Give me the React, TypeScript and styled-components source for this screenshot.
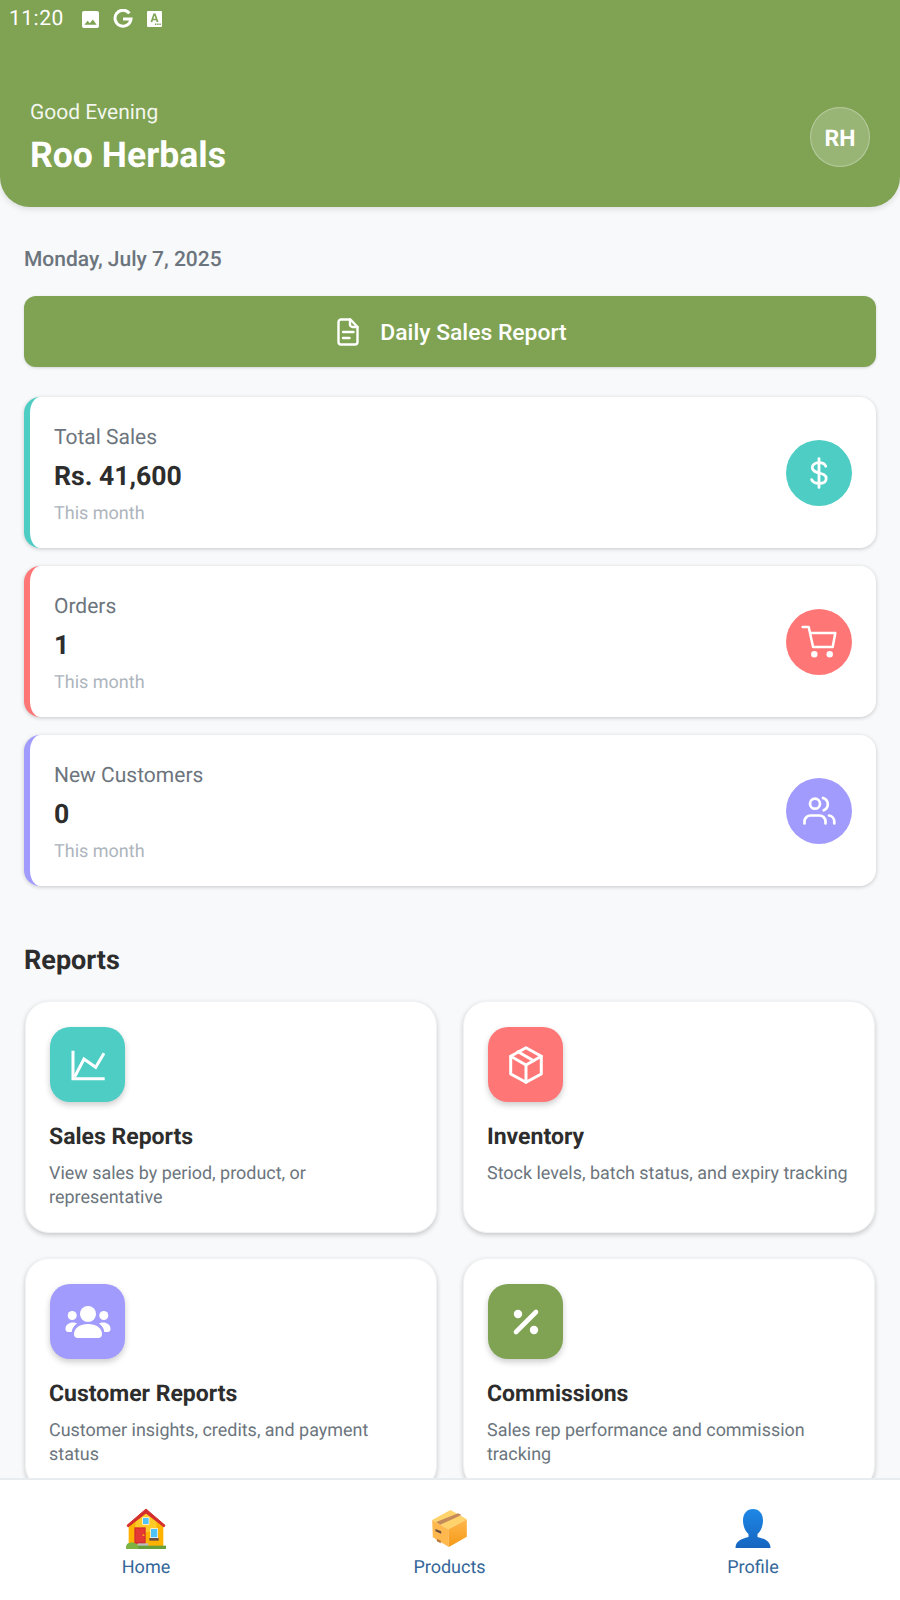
import { ReactNode } from 'react';
import styled, { createGlobalStyle } from 'styled-components';

const GREEN = '#7fa353';
const TEAL = '#4ecdc4';
const CORAL = '#ff7676';
const VIOLET = '#a29bfe';

const GlobalStyle = createGlobalStyle`
  html, body { margin: 0; padding: 0; background: #f8f9fa; }
  * { box-sizing: border-box; }
  body { font-family: Roboto, "Noto Sans", sans-serif; text-rendering: geometricPrecision; }
`;

const Screen = styled.div` width: 900px; height: 1600px; display: flex; flex-direction: column; overflow: hidden; background: #f8f9fa; `;
const Main = styled.div` flex: 1; min-height: 0; overflow: hidden; `;

const Header = styled.header`
  height: 207px; padding: 0 30px; background: ${GREEN}; color: #fff;
  border-radius: 0 0 30px 30px; box-shadow: 0 2px 6px rgba(0,0,0,.12); display: flex; flex-direction: column;
`;
const StatusBar = styled.div` height: 38px; margin-left: -21px; display: flex; align-items: center; gap: 18px; font-size: 21px; letter-spacing: .5px; `;
const StatusIcons = styled.div` display: flex; align-items: center; gap: 14px; `;
const Hero = styled.div` flex: 1; display: flex; justify-content: space-between; align-items: flex-start; padding-top: 64px; `;
const Greeting = styled.div` font-size: 21px; line-height: 24px; margin-top: -1px; color: rgba(255,255,255,.92); `;
const Name = styled.div` font-size: 35.6px; line-height: 44px; font-weight: 700; margin-top: 8px; `;
const Avatar = styled.div`
  width: 60px; height: 60px; margin-top: 5px; padding-top: 2px; border-radius: 50%; background: rgba(255,255,255,.2); border: 1px solid rgba(255,255,255,.3);
  display: flex; align-items: center; justify-content: center; font-size: 23px; font-weight: 700;
`;

const Body = styled.div` padding: 37px 24px 0; `;
const DateText = styled.div` font-size: 21px; line-height: 32px; font-weight: 500; color: #6c757d; margin-bottom: 20px; `;
const ReportButton = styled.button`
  width: 100%; height: 71px; padding: 1px 0 0 4px; border: none; border-radius: 12px; background: ${GREEN}; color: #fff; font-family: inherit; font-size: 22.9px; font-weight: 500;
  display: flex; align-items: center; justify-content: center; gap: 21px; box-shadow: 0 1px 3px rgba(0,0,0,.15);
`;

const StatList = styled.div` display: flex; flex-direction: column; gap: 18px; margin-top: 30px; `;
const StatCard = styled.div<{ $accent: string }>`
  height: 151px; padding: 0 24px; background: #fff; border-radius: 16px; border-left: 6px solid ${(p) => p.$accent};
  box-shadow: 0 1px 4px rgba(0,0,0,.2); display: flex; align-items: center; justify-content: space-between;
`;
const StatCopy = styled.div` padding-top: 5px; `;
const StatLabel = styled.div` font-size: 21px; line-height: 24px; color: #6c757d; `;
const StatValue = styled.div` font-size: 26.6px; line-height: 34px; font-weight: 700; color: #2d2d2d; margin-top: 10px; `;
const StatNote = styled.div` font-size: 18px; line-height: 22px; color: #adb5bd; margin-top: 9px; `;
const StatIcon = styled.div<{ $bg: string }>`
  width: 66px; height: 66px; border-radius: 50%; background: ${(p) => p.$bg}; display: flex; align-items: center; justify-content: center;
`;

const SectionTitle = styled.h2` margin: 56px 0 23px; font-size: 27px; line-height: 36px; font-weight: 700; color: #2d2d2d; `;
const ReportGrid = styled.div` display: grid; grid-template-columns: 1fr 1fr; column-gap: 26px; row-gap: 25px; padding: 0 1px; `;
const ReportCard = styled.div`
  height: 232px; padding: 25px 23px; background: #fff; border-radius: 24px; border: 1px solid #f1f2f3; box-shadow: 0 2px 5px rgba(0,0,0,.2);
`;
const ReportIcon = styled.div<{ $bg: string }>`
  width: 75px; height: 75px; margin-left: 1px; border-radius: 20px; background: ${(p) => p.$bg}; box-shadow: 0 3px 6px rgba(0,0,0,.2);
  display: flex; align-items: center; justify-content: center;
`;
const ReportTitle = styled.div` margin-top: 21px; font-size: 23px; line-height: 28px; font-weight: 700; color: #2d2d2d; `;
const ReportText = styled.div` margin-top: 11px; font-size: 17.95px; line-height: 24px; color: #6c757d; `;

const BottomNav = styled.nav` height: 122px; flex: none; background: #fff; border-top: 2px solid #e9ecef; display: flex; justify-content: space-between; padding: 0 87px 0 86px; `;
const NavItem = styled.div` width: 120px; display: flex; flex-direction: column; align-items: center; padding-top: 26px; color: #336699; `;
const NavGlyph = styled.div` height: 44px; display: flex; align-items: center; justify-content: center; `;
const NavLabel = styled.div` font-size: 18px; line-height: 24px; margin-top: 6px; `;

const Stroke = ({ size = 40, width = 2.5, children }: { size?: number; width?: number; children: ReactNode }) => (
  <svg width={size} height={size} viewBox="0 0 40 40" fill="none" stroke="#fff" strokeWidth={width} strokeLinecap="round" strokeLinejoin="round">{children}</svg>
);

const HouseEmoji = () => (
  <svg width="40" height="41" viewBox="0 0 120 123">
    <path d="M8 50 60 12l52 38v65H8z" fill="#ffb300" />
    <path d="M60 16 28 42v30h64V42z" fill="#ffca28" />
    <path d="M3 52 60 3l57 49-3 5-54-42L6 57z" fill="#d32f2f" stroke="#d32f2f" strokeWidth="3" strokeLinejoin="round" />
    <rect x="49" y="28" width="21" height="22" fill="#fff" />
    <rect x="51" y="30" width="17" height="18" fill="#4fc3f7" />
    <rect x="73" y="61" width="23" height="29" fill="#fff" />
    <rect x="75" y="63" width="19" height="25" fill="#4fc3f7" />
    <rect x="70" y="90" width="28" height="8" fill="#6d4c41" />
    <rect x="25" y="58" width="34" height="50" fill="#d32f2f" />
    <rect x="29" y="62" width="26" height="40" fill="#e53935" />
    <rect x="50" y="79" width="5" height="5" fill="#ffb300" />
    <rect x="35" y="106" width="32" height="11" fill="#bdbdbd" />
    <rect x="1" y="113" width="119" height="10" fill="#689f38" />
    <path d="M1 123v-9c1-7 6-10 10-9 4-4 11-3 14 1 7 0 12 5 12 17z" fill="#7cb342" />
  </svg>
);

const BoxEmoji = () => (
  <svg width="35" height="37" viewBox="0 0 104 111">
    <defs>
      <linearGradient id="boxRight" x1="0" y1="0" x2="0" y2="1">
        <stop offset="0" stopColor="#ffb74d" />
        <stop offset="1" stopColor="#f59a16" />
      </linearGradient>
    </defs>
    <path d="M55 0 104 28 48 58 0 30z" fill="#ffd36b" />
    <path d="M0 30 48 58 50 111 2 82z" fill="#ffb84d" />
    <path d="M48 58 104 28V80L50 111z" fill="url(#boxRight)" />
    <path d="M12 36 78 10 88 15 24 44z" fill="#c48a5a" />
    <path d="M10 57 27 64 27 71 10 64z" fill="#6d4c41" />
    <path d="M14 86 26 92 26 100 14 94z" fill="#b9773c" />
  </svg>
);

const PersonEmoji = () => (
  <svg width="36" height="39" viewBox="0 0 36 39">
    <defs>
      <linearGradient id="personFill" x1="0" y1="0" x2="0" y2="1">
        <stop offset="0" stopColor="#1e88e5" />
        <stop offset="1" stopColor="#1565c0" />
      </linearGradient>
    </defs>
    <path d="M18 0c6 0 10 4.500 10 11.500 0 6-2.500 11-5.500 13.500v3c5 1.500 13 3 13 11H.5c0-8 8-9.500 13-11v-3C10.500 22.500 8 17.500 8 11.500 8 4.500 12 0 18 0z" fill="url(#personFill)" />
  </svg>
);

const stats = [
  {
    label: 'Total Sales', value: 'Rs. 41,600', color: TEAL,
    icon: <Stroke size={36} width={3.1}><path d="M20 4v32" /><path d="M27.500 12.500C26.500 10 24 8.500 20 8.500c-4.500 0-7.500 2.200-7.500 5.500 0 8 15.500 4 15.500 12 0 3.500-3.200 5.500-8 5.500-4.200 0-7.200-1.500-8.200-4.200" /></Stroke>,
  },
  {
    label: 'Orders', value: '1', color: CORAL,
    icon: <Stroke><path d="M3.700 5h6l4.400 20h19.600l2.600-14H11.300" /><circle cx="15.300" cy="32.300" r="2" fill="#fff" /><circle cx="30.700" cy="32.300" r="2" fill="#fff" /></Stroke>,
  },
  {
    label: 'New Customers', value: '0', color: VIOLET,
    icon: <Stroke width={2.7}><circle cx="16" cy="12.700" r="5" /><path d="M5.500 32.500v-2a6 6 0 0 1 6-6h9a6 6 0 0 1 6 6v2" /><path d="M24 7a6.500 6.500 0 0 1 .7 12.300" /><path d="M30 24.500c3 .5 5.300 3 5.300 6v2" /></Stroke>,
  },
];

const reports = [
  {
    title: 'Sales Reports', text: 'View sales by period, product, or representative', color: TEAL,
    icon: <Stroke width={3}><path d="M5 5.700v28h31.700" strokeLinecap="butt" strokeLinejoin="miter" /><path d="M6.700 31.700 16 14l11.700 8.300L36 8.300" strokeLinecap="butt" strokeLinejoin="miter" /></Stroke>,
  },
  {
    title: 'Inventory', text: 'Stock levels, batch status, and expiry tracking', color: CORAL,
    icon: <Stroke width={3}><path d="M20 2.700 35.300 11.300V29L20 37.300 4.700 29V11.300z" /><path d="M4.700 11.300 20 20l15.300-8.700" /><path d="M20 20v17.300" /><path d="M12 6.700l15.700 9" /></Stroke>,
  },
  {
    title: 'Customer Reports', text: 'Customer insights, credits, and payment status', color: VIOLET,
    icon: (
      <svg width={48} height={48} viewBox="0 0 48 48" fill="#fff">
        <circle cx="24" cy="16" r="8" />
        <circle cx="8.200" cy="17.500" r="4.500" />
        <circle cx="39.800" cy="17.500" r="4.500" />
        <path d="M10 36c0-6 6-10 14-10s14 4 14 10a4 4 0 0 1-4 4H14a4 4 0 0 1-4-4z" />
        <path d="M1.500 30.500c0-3.500 3.500-6 7.500-6 1.500 0 3 .3 4 1-3 2-5 5-5.300 8.500H4.500a3 3 0 0 1-3-3z" />
        <path d="M46.500 30.500c0-3.500-3.500-6-7.500-6-1.500 0-3 .3-4 1 3 2 5 5 5.300 8.500h3.200a3 3 0 0 0 3-3z" />
      </svg>
    ),
  },
  {
    title: 'Commissions', text: 'Sales rep performance and commission tracking', color: GREEN,
    icon: (
      <svg width={36} height={36} viewBox="0 0 36 36" fill="#fff">
        <circle cx="10" cy="10" r="4.200" />
        <circle cx="26" cy="26" r="4.200" />
        <path d="M28 8 8 28" stroke="#fff" strokeWidth="4.600" strokeLinecap="round" />
      </svg>
    ),
  },
];

const nav = [
  { glyph: <HouseEmoji />, label: 'Home' },
  { glyph: <BoxEmoji />, label: 'Products' },
  { glyph: <PersonEmoji />, label: 'Profile' },
];

export default function App() {
  return (
    <Screen>
      <GlobalStyle />
      <Main>
        <Header>
          <StatusBar>
            <span>11:20</span>
            <StatusIcons>
              <svg width="17" height="17" viewBox="0 0 18 18" fill="#fff"><path fillRule="evenodd" d="M2 0h14a2 2 0 0 1 2 2v14a2 2 0 0 1-2 2H2a2 2 0 0 1-2-2V2a2 2 0 0 1 2-2zm.5 14.500h13L11.500 9l-3.200 4-2.300-2.800z" /></svg>
              <svg width="20" height="20" viewBox="0 0 20 20" fill="none" stroke="#fff" strokeWidth="3"><path d="M16.400 4.300A8 8 0 1 0 18 10h-8" /></svg>
              <svg width="15" height="16" viewBox="0 0 15 16"><path fill="#fff" d="M1 0h13a1 1 0 0 1 1 1v14a1 1 0 0 1-1 1H1a1 1 0 0 1-1-1V1a1 1 0 0 1 1-1z" /><path fill={GREEN} d="M6.500 2.500h2L11.500 11H9.700l-.6-1.800H5.900L5.300 11H3.500zM6.400 7.800h2.200L7.500 4.500zM8 12.500h1.400V14H8zM10.200 12.500h1.400V14h-1.400zM12.400 12.500h1.400V14h-1.400z" /></svg>
            </StatusIcons>
          </StatusBar>
          <Hero>
            <div>
              <Greeting>Good Evening</Greeting>
              <Name>Roo Herbals</Name>
            </div>
            <Avatar>RH</Avatar>
          </Hero>
        </Header>
        <Body>
          <DateText>Monday, July 7, 2025</DateText>
          <ReportButton>
            <svg width="22" height="28" viewBox="0 0 22 28" fill="none" stroke="#fff" strokeWidth="2.400" strokeLinecap="round" strokeLinejoin="round">
              <path d="M4 1.500h9.500l7 7.500v15a2.500 2.500 0 0 1-2.500 2.500H4A2.500 2.500 0 0 1 1.500 24V4A2.500 2.500 0 0 1 4 1.500z" />
              <path d="M13 1.500v5a2.500 2.500 0 0 0 2.500 2.500h5" />
              <path d="M6 14h10.500" />
              <path d="M6 20h6.500" />
            </svg>
            Daily Sales Report
          </ReportButton>
          <StatList>
            {stats.map((s) => (
              <StatCard key={s.label} $accent={s.color}>
                <StatCopy>
                  <StatLabel>{s.label}</StatLabel>
                  <StatValue>{s.value}</StatValue>
                  <StatNote>This month</StatNote>
                </StatCopy>
                <StatIcon $bg={s.color}>{s.icon}</StatIcon>
              </StatCard>
            ))}
          </StatList>
          <SectionTitle>Reports</SectionTitle>
          <ReportGrid>
            {reports.map((r) => (
              <ReportCard key={r.title}>
                <ReportIcon $bg={r.color}>{r.icon}</ReportIcon>
                <ReportTitle>{r.title}</ReportTitle>
                <ReportText>{r.text}</ReportText>
              </ReportCard>
            ))}
          </ReportGrid>
        </Body>
      </Main>
      <BottomNav>
        {nav.map((n) => (
          <NavItem key={n.label}>
            <NavGlyph>{n.glyph}</NavGlyph>
            <NavLabel>{n.label}</NavLabel>
          </NavItem>
        ))}
      </BottomNav>
    </Screen>
  );
}
